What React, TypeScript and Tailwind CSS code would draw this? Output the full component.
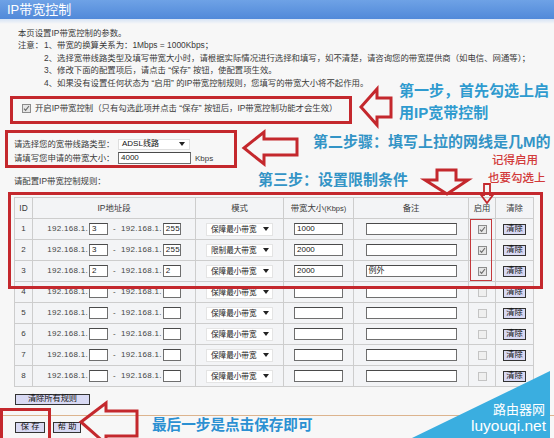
import React from "react";

type Rule = {
  id: number;
  start: string;
  end: string;
  mode: string;
  bw: string;
  note: string;
  on: boolean;
};

const rules: Rule[] = [
  { id: 1, start: "3", end: "255", mode: "保障最小带宽", bw: "1000", note: "", on: true },
  { id: 2, start: "3", end: "255", mode: "限制最大带宽", bw: "2000", note: "", on: true },
  { id: 3, start: "2", end: "2", mode: "保障最小带宽", bw: "2000", note: "例外", on: true },
  { id: 4, start: "", end: "", mode: "保障最小带宽", bw: "", note: "", on: false },
  { id: 5, start: "", end: "", mode: "保障最小带宽", bw: "", note: "", on: false },
  { id: 6, start: "", end: "", mode: "保障最小带宽", bw: "", note: "", on: false },
  { id: 7, start: "", end: "", mode: "保障最小带宽", bw: "", note: "", on: false },
  { id: 8, start: "", end: "", mode: "保障最小带宽", bw: "", note: "", on: false },
];

const Caret = () => (
  <svg width="6" height="4" viewBox="0 0 6 4" className="shrink-0">
    <path d="M0 0h6L3 4z" fill="#222" />
  </svg>
);

const TextBox = ({ w, value }: { w: string; value?: string }) => (
  <span
    className={`${w} inline-flex h-[12px] items-center border border-[#6f6f6f] border-t-[#4a4a4a] bg-white px-[2px] text-[8px] leading-none text-[#222]`}
  >
    {value}
  </span>
);

const Check = ({ on }: { on: boolean }) =>
  on ? (
    <span className="inline-flex h-[9px] w-[9px] items-center justify-center border border-[#8c8c8c] bg-[#e6e6e6]">
      <svg width="7" height="7" viewBox="0 0 7 7">
        <path d="M1 3.6l1.6 1.8L6 1" fill="none" stroke="#6a6a6a" strokeWidth="1.1" />
      </svg>
    </span>
  ) : (
    <span className="inline-block h-[9px] w-[9px] border border-[#c4c4c4] bg-[#efefef]" />
  );

const Btn = ({ w, children }: { w: string; children: React.ReactNode }) => (
  <span
    className={`${w} inline-flex h-[11px] items-center justify-center border border-[#333] bg-[#d8d9f3] text-[8.2px] leading-none text-[#111]`}
  >
    {children}
  </span>
);

const cell = "border border-[#cdcdcd] bg-[#f3f4f6] p-0 text-center align-middle";

export default function App() {
  return (
    <div className="relative h-[438px] w-[554px] overflow-hidden bg-[#f7f7f7] font-['Liberation_Sans','Noto_Sans_CJK_SC',sans-serif] text-[#3a3a3a]">
      {/* title bar */}
      <div className="h-[19px] bg-gradient-to-b from-[#6ea2e6] to-[#5189d9] pl-[7px] text-[13px] leading-[19px] text-white">
        IP带宽控制
      </div>
      <div className="h-[5px] bg-gradient-to-b from-[#d6e3f5] to-[#f7f7f7]" />

      <div className="px-[14px] pt-[3px] text-[8.4px] leading-[12.4px]">
        <p className="pl-[4px]">本页设置IP带宽控制的参数。</p>
        <div className="flex pl-[4px]">
          <span className="w-[26px] shrink-0">注意：</span>
          <div>
            <p>1、带宽的换算关系为：1Mbps = 1000Kbps；</p>
            <p>2、选择宽带线路类型及填写带宽大小时，请根据实际情况进行选择和填写，如不清楚，请咨询您的带宽提供商（如电信、网通等）；</p>
            <p>3、修改下面的配置项后，请点击 “保存” 按钮，使配置项生效。</p>
            <p>4、如果没有设置任何状态为 “启用” 的IP带宽控制规则，您填写的带宽大小将不起作用。</p>
          </div>
        </div>

        <div className="mt-[13px] flex h-[12px] items-center gap-[4px] pl-[8px]">
          <Check on />
          <span>开启IP带宽控制（只有勾选此项并点击 “保存” 按钮后，IP带宽控制功能才会生效）</span>
        </div>

        <div className="mt-[24px] flex h-[12px] items-center">
          <span className="w-[104px] shrink-0">请选择您的宽带线路类型：</span>
          <span className="flex h-[11px] w-[72px] items-center justify-between border border-[#dedede] bg-white pl-[3px] pr-[4px] text-[8px] leading-none text-[#111]">
            ADSL线路
            <Caret />
          </span>
        </div>
        <div className="mt-[2px] flex h-[12px] items-center">
          <span className="w-[104px] shrink-0">请填写您申请的带宽大小：</span>
          <TextBox w="w-[73px]" value="4000" />
          <span className="ml-[4px] mt-[3px] text-[8px]">Kbps</span>
        </div>

        <p className="mt-[11px]">请配置IP带宽控制规则：</p>

        <table className="mt-[10px] w-[519px] table-fixed border-collapse">
          <colgroup>
            <col className="w-[18px]" />
            <col className="w-[163px]" />
            <col className="w-[88px]" />
            <col className="w-[70px]" />
            <col className="w-[115px]" />
            <col className="w-[27px]" />
            <col className="w-[38px]" />
          </colgroup>
          <thead>
            <tr className="h-[21px]">
              <th className={`${cell} font-normal`}>ID</th>
              <th className={`${cell} font-normal`}>IP地址段</th>
              <th className={`${cell} font-normal`}>模式</th>
              <th className={`${cell} font-normal`}>
                带宽大小<span className="text-[7.5px]">(Kbps)</span>
              </th>
              <th className={`${cell} font-normal`}>备注</th>
              <th className={`${cell} font-normal`}>启用</th>
              <th className={`${cell} font-normal`}>清除</th>
            </tr>
          </thead>
          <tbody>
            {rules.map((r) => (
              <tr key={r.id} className="h-[21px]">
                <td className={`${cell} text-[8px]`}>{r.id}</td>
                <td className={cell}>
                  <div className="flex items-center justify-center text-[8px] tracking-[0.3px] text-[#444]">
                    <span className="mr-[1px]">192.168.1.</span>
                    <TextBox w="w-[19px]" value={r.start} />
                    <span className="mx-[5px]">-</span>
                    <span className="mr-[1px]">192.168.1.</span>
                    <TextBox w="w-[18px]" value={r.end} />
                  </div>
                </td>
                <td className={cell}>
                  <div className="flex justify-center">
                    <span className="flex h-[13px] w-[67px] items-center justify-between whitespace-nowrap border border-[#e4e4e4] bg-white pl-[4px] pr-[3px] text-[7.6px] leading-none text-[#222]">
                      {r.mode}
                      <Caret />
                    </span>
                  </div>
                </td>
                <td className={cell}>
                  <div className="flex justify-center">
                    <TextBox w="w-[49px]" value={r.bw} />
                  </div>
                </td>
                <td className={cell}>
                  <div className="flex justify-center">
                    <TextBox w="w-[91px]" value={r.note} />
                  </div>
                </td>
                <td className={cell}>
                  <div className="flex justify-center">
                    <Check on={r.on} />
                  </div>
                </td>
                <td className={cell}>
                  <div className="flex justify-center">
                    <Btn w="w-[23px]">清除</Btn>
                  </div>
                </td>
              </tr>
            ))}
          </tbody>
        </table>

        <div className="mt-[5px] pl-[1px]">
          <Btn w="w-[75px]">清除所有规则</Btn>
        </div>
      </div>

      <div className="mt-[10px] h-px bg-[#dcb48e]" />

      <div className="mt-[6px] flex gap-[8px] pl-[15px]">
        <Btn w="w-[30px]">保 存</Btn>
        <Btn w="w-[28px]">帮 助</Btn>
      </div>

      {/* annotation overlay */}
      <div className="absolute left-[10px] top-[96px] h-[28px] w-[342px] border-[3px] border-[#c4282d]" />
      <div className="absolute left-[5px] top-[130px] h-[38px] w-[232px] border-[3px] border-[#c4282d]" />
      <div className="absolute left-[8px] top-[192px] h-[97px] w-[535px] border-[3px] border-[#c4282d]" />
      <div className="absolute left-[470px] top-[219px] h-[62px] w-[22px] border-[1.5px] border-[#c4383c]" />
      <div className="absolute left-0 top-[408px] h-[40px] w-[51px] border-[3px] border-[#c4282d]" />

      <svg className="pointer-events-none absolute inset-0" width="554" height="438" viewBox="0 0 554 438">
        <g fill="none" stroke="#c4282d" strokeWidth="3" strokeLinejoin="miter">
          <path d="M361 107L377 89V98H391V117H377V125Z" />
          <path d="M244 148L264 132V139H297V155H264V164Z" />
          <path d="M437 170H456V180H468L447 194L425 180H437Z" />
          <path d="M81 422L106 403V411H137V436H106V444Z" />
        </g>
        <path d="M484 184H490V195H493L487 203L481 195H484Z" fill="none" stroke="#c4282d" strokeWidth="1.8" />
        <path d="M412 438L550 371V438Z" fill="#3aaee0" />
      </svg>

      <div className="absolute left-[399px] top-[81px] whitespace-nowrap text-[15px] font-bold leading-[20px] text-[#2f9bcf]">
        第一步，首先勾选上启
      </div>
      <div className="absolute left-[399px] top-[103px] whitespace-nowrap text-[15px] font-bold leading-[20px] text-[#2f9bcf]">
        用IP宽带控制
      </div>
      <div className="absolute left-[313px] top-[132px] whitespace-nowrap text-[15px] font-bold leading-[20px] text-[#3394c6]">
        第二步骤：填写上拉的网线是几M的
      </div>
      <div className="absolute left-[258px] top-[170px] whitespace-nowrap text-[15px] font-bold leading-[20px] text-[#3394c6]">
        第三步：设置限制条件
      </div>
      <div className="absolute left-[492px] top-[152px] whitespace-nowrap text-[11.5px] font-medium leading-[16px] text-[#d23a3a]">
        记得启用
      </div>
      <div className="absolute left-[488px] top-[170px] whitespace-nowrap text-[11.5px] font-medium leading-[16px] text-[#d23a3a]">
        也要勾选上
      </div>
      <div className="absolute left-[152px] top-[415px] whitespace-nowrap text-[14.6px] font-bold leading-[20px] text-[#2b90d2]">
        最后一步是点击保存即可
      </div>

      <div className="absolute right-[9px] top-[401px] text-right text-[13px] leading-[17px] text-white">
        路由器网
      </div>
      <div className="absolute right-[8px] top-[416px] text-right text-[15.5px] leading-[19px] text-white">
        luyouqi.net
      </div>
    </div>
  );
}
